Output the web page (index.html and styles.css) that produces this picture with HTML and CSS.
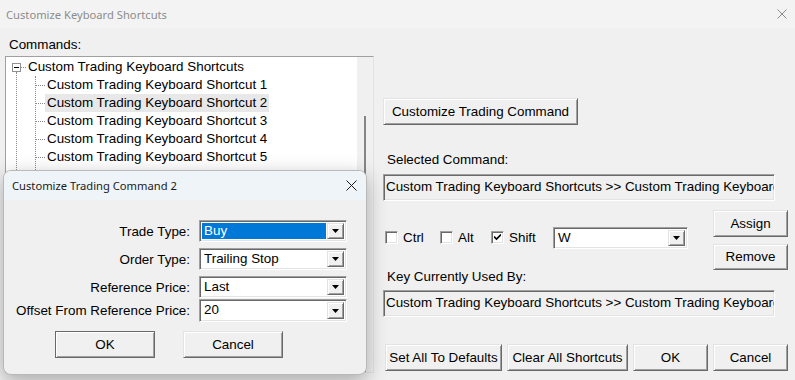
FILE: index.html
```html
<!DOCTYPE html>
<html lang="en">
<head>
    <meta charset="UTF-8">
    <title>Customize Keyboard Shortcuts</title>
    <link rel="stylesheet" href="styles.css">
</head>
<body>
    <div class="window">
        <div class="titlebar">
            <span class="title">Customize Keyboard Shortcuts</span>
            <svg class="close" width="10" height="10" viewBox="0 0 10 10">
                <path d="M0.5 0.5L9.5 9.5M9.5 0.5L0.5 9.5" stroke="#8a8a8a" stroke-width="1"/>
            </svg>
        </div>

        <div class="main">
            <div class="left">
                <div class="label">Commands:</div>
                <div class="tree">
                    <div class="tree-items">
                        <div class="root-row">
                            <span class="expander"></span>
                            <span class="hline short"></span>
                            <span class="node-text">Custom Trading Keyboard Shortcuts</span>
                        </div>
                        <div class="trunk">
                            <div class="children">
                                <div class="child-row"><span class="hline"></span><span class="node-text">Custom Trading Keyboard Shortcut 1</span></div>
                                <div class="child-row"><span class="hline"></span><span class="node-text selected">Custom Trading Keyboard Shortcut 2</span></div>
                                <div class="child-row"><span class="hline"></span><span class="node-text">Custom Trading Keyboard Shortcut 3</span></div>
                                <div class="child-row"><span class="hline"></span><span class="node-text">Custom Trading Keyboard Shortcut 4</span></div>
                                <div class="child-row"><span class="hline"></span><span class="node-text">Custom Trading Keyboard Shortcut 5</span></div>
                                <div class="child-row"><span class="hline"></span><span class="node-text">Custom Trading Keyboard Shortcut 6</span></div>
                            </div>
                        </div>
                    </div>
                    <div class="scrollbar"><div class="thumb"></div></div>
                </div>
            </div>

            <div class="right">
                <button class="btn customize">Customize Trading Command</button>

                <div class="label selected-label">Selected Command:</div>
                <div class="field">Custom Trading Keyboard Shortcuts &gt;&gt; Custom Trading Keyboard Shortcut 2</div>

                <div class="keys-row">
                    <div class="modifiers">
                        <label class="check"><span class="box"></span>Ctrl</label>
                        <label class="check"><span class="box"></span>Alt</label>
                        <label class="check"><span class="box">
                            <svg width="7" height="7" viewBox="0 0 7 7"><path d="M0 2.5L2.5 5L7 0.5" stroke="#000" stroke-width="1.6" fill="none"/></svg>
                        </span>Shift</label>
                        <div class="combo key-combo">
                            <span class="combo-value">W</span>
                            <span class="combo-btn"><svg width="7" height="4" viewBox="0 0 7 4"><path d="M0 0H7L3.5 4Z"/></svg></span>
                        </div>
                    </div>
                    <div class="side-buttons">
                        <button class="btn side">Assign</button>
                        <button class="btn side">Remove</button>
                    </div>
                </div>

                <div class="label used-label">Key Currently Used By:</div>
                <div class="field">Custom Trading Keyboard Shortcuts &gt;&gt; Custom Trading Keyboard Shortcut 2</div>

                <div class="bottom-buttons">
                    <button class="btn defaults">Set All To Defaults</button>
                    <button class="btn clear">Clear All Shortcuts</button>
                    <button class="btn side">OK</button>
                    <button class="btn side">Cancel</button>
                </div>
            </div>
        </div>

        <!-- child dialog opened over the main window -->
        <div class="dialog">
            <div class="dialog-titlebar">
                <span>Customize Trading Command 2</span>
                <svg width="11" height="11" viewBox="0 0 11 11">
                    <path d="M0.5 0.5L10.5 10.5M10.5 0.5L0.5 10.5" stroke="#1a1a1a" stroke-width="1"/>
                </svg>
            </div>
            <div class="dialog-body">
                <div class="form">
                    <div class="form-label">Trade Type:</div>
                    <div class="combo">
                        <span class="combo-value highlighted">Buy</span>
                        <span class="combo-btn"><svg width="7" height="4" viewBox="0 0 7 4"><path d="M0 0H7L3.5 4Z"/></svg></span>
                    </div>

                    <div class="form-label">Order Type:</div>
                    <div class="combo">
                        <span class="combo-value">Trailing Stop</span>
                        <span class="combo-btn"><svg width="7" height="4" viewBox="0 0 7 4"><path d="M0 0H7L3.5 4Z"/></svg></span>
                    </div>

                    <div class="form-label">Reference Price:</div>
                    <div class="combo">
                        <span class="combo-value">Last</span>
                        <span class="combo-btn"><svg width="7" height="4" viewBox="0 0 7 4"><path d="M0 0H7L3.5 4Z"/></svg></span>
                    </div>

                    <div class="form-label">Offset From Reference Price:</div>
                    <div class="combo tall">
                        <span class="combo-value">20</span>
                        <span class="combo-btn"><svg width="7" height="4" viewBox="0 0 7 4"><path d="M0 0H7L3.5 4Z"/></svg></span>
                    </div>
                </div>
                <div class="dialog-buttons">
                    <button class="btn dlg default">OK</button>
                    <button class="btn dlg">Cancel</button>
                </div>
            </div>
        </div>
    </div>
</body>
</html>
```

FILE: styles.css
```css
* {
    margin: 0;
    padding: 0;
    box-sizing: border-box;
}

body {
    font-family: "Liberation Sans", Arial, sans-serif;
    font-size: 13.4px;
    color: #000;
    background: #f0f0f0;
}

.window {
    position: relative;
    width: 795px;
    height: 380px;
    overflow: hidden;
    background: #f0f0f0;
}

.titlebar {
    height: 28px;
    background: #f3f3f3;
    display: flex;
    align-items: center;
    justify-content: space-between;
    padding: 0 8px 0 6px;
}

.title {
    font-family: "Noto Sans", sans-serif;
    font-size: 11.2px;
    color: #8c8c8c;
}

.main {
    display: flex;
    padding-left: 5px;
}

.left {
    width: 369px;
}

.label {
    line-height: 14px;
    white-space: nowrap;
}

.left .label {
    margin: 10px 0 4px 4px;
}

/* tree view */
.tree {
    height: 317px;
    display: flex;
    background: #fff;
    border: 1px solid;
    border-color: #a0a0a0 #e3e3e3 #e3e3e3 #a0a0a0;
    overflow: hidden;
}

.tree-items {
    flex: 1;
    padding-top: 1px;
}

.root-row,
.child-row {
    height: 18px;
    display: flex;
    align-items: center;
    white-space: nowrap;
}

.expander {
    width: 9px;
    height: 9px;
    margin-left: 6px;
    border: 1px solid #919191;
    background: #fff;
    display: flex;
    align-items: center;
    justify-content: center;
}

.expander::after {
    content: "";
    width: 5px;
    height: 1px;
    background: #000;
}

.hline {
    width: 9px;
    border-top: 1px dotted #8a8a8a;
}

.hline.short {
    width: 5px;
}

.node-text {
    padding: 0 2px;
    line-height: 18px;
}

.node-text.selected {
    background: #e8e8e8;
}

.trunk {
    margin: -4px 0 0 10px;
    padding: 4px 0 200px;
    border-left: 1px dotted #8a8a8a;
}

.children {
    margin-left: 18px;
    padding-bottom: 200px;
    border-left: 1px dotted #8a8a8a;
}

.scrollbar {
    width: 16px;
    background: #f0f0f0;
    padding-top: 59px;
    display: flex;
    justify-content: center;
}

.thumb {
    width: 2px;
    height: 300px;
    background: #858585;
}

/* right column */
.right {
    width: 406px;
    margin-left: 9px;
}

.btn {
    font-family: "Liberation Sans", Arial, sans-serif;
    font-size: 13.4px;
    color: #000;
    background: #f0f0f0;
    height: 27px;
    border: 1px solid;
    border-color: #e3e3e3 #696969 #696969 #e3e3e3;
    box-shadow: inset 1px 1px #fff, inset -1px -1px #a0a0a0;
    white-space: nowrap;
}

.btn.customize {
    width: 195px;
    margin-top: 70px;
}

.selected-label {
    margin: 28px 0 7px 4px;
}

.field {
    width: 392px;
    height: 27px;
    line-height: 23px;
    border: 1px solid;
    border-color: #a0a0a0 #fff #fff #a0a0a0;
    box-shadow: inset 1px 1px #696969, inset -1px -1px #e3e3e3;
    padding-left: 2px;
    overflow: hidden;
    white-space: nowrap;
}

.keys-row {
    height: 60px;
    margin-top: 9px;
    display: flex;
    justify-content: space-between;
    padding-right: 1px;
}

.modifiers {
    display: grid;
    grid-template-columns: 55px 51px 62px 135px;
    align-items: center;
    height: 23px;
    margin-top: 16px;
    padding-left: 2px;
}

.check {
    display: flex;
    align-items: center;
    gap: 5px;
}

.box {
    width: 13px;
    height: 13px;
    background: #fff;
    border: 1px solid;
    border-color: #a0a0a0 #fff #fff #a0a0a0;
    box-shadow: inset 1px 1px #696969, inset -1px -1px #e3e3e3;
    display: flex;
    align-items: center;
    justify-content: center;
}

.side-buttons {
    display: flex;
    flex-direction: column;
    gap: 7px;
}

.btn.side {
    width: 75px;
}

.used-label {
    margin: 0 0 6px 4px;
}

.bottom-buttons {
    display: flex;
    gap: 5px;
    margin-top: 27px;
    padding-left: 2px;
}

.btn.defaults {
    width: 117px;
}

.btn.clear {
    width: 121px;
}

/* combo boxes */
.combo {
    height: 22px;
    display: flex;
    background: #fff;
    border: 1px solid;
    border-color: #a0a0a0 #fff #fff #a0a0a0;
    box-shadow: inset 1px 1px #696969, inset -1px -1px #e3e3e3;
    padding: 2px;
}

.combo.tall {
    height: 23px;
}

.combo-value {
    flex: 1;
    line-height: 16px;
    padding-left: 2px;
    margin-right: 1px;
    white-space: nowrap;
}

.combo-value.highlighted {
    background: #0078d7;
    color: #fff;
}

.combo-btn {
    width: 17px;
    background: #f0f0f0;
    border: 1px solid;
    border-color: #e3e3e3 #696969 #696969 #e3e3e3;
    box-shadow: inset 1px 1px #fff, inset -1px -1px #a0a0a0;
    display: flex;
    align-items: center;
    justify-content: center;
}

/* dialog */
.dialog {
    position: absolute;
    left: 3px;
    top: 170px;
    width: 364px;
    height: 205px;
    background: #f0f0f0;
    border: 1px solid #b9b9b9;
    border-radius: 8px;
    box-shadow: 0 6px 20px rgba(0, 0, 0, 0.3);
    overflow: hidden;
}

.dialog-titlebar {
    height: 29px;
    background: #eff4f9;
    display: flex;
    align-items: center;
    justify-content: space-between;
    padding: 0 9px 0 8px;
    font-family: "Noto Sans", sans-serif;
    font-size: 11.2px;
    color: #1a1a1a;
}

.dialog-body {
    padding-top: 20px;
}

.form {
    display: grid;
    grid-template-columns: 186px 148px;
    column-gap: 9px;
    row-gap: 6px;
    align-items: center;
}

.form > :nth-child(7),
.form > :nth-child(8) {
    margin-top: -5px;
}

.form-label {
    text-align: right;
    white-space: nowrap;
}

.dialog-buttons {
    display: flex;
    gap: 28px;
    margin: 9px 0 0 51px;
}

.btn.dlg {
    width: 100px;
}

.btn.default {
    border-color: #696969;
    box-shadow: inset 1px 1px #fff, inset -1px -1px #a0a0a0, inset 0 0 0 1px #f0f0f0;
}
```
